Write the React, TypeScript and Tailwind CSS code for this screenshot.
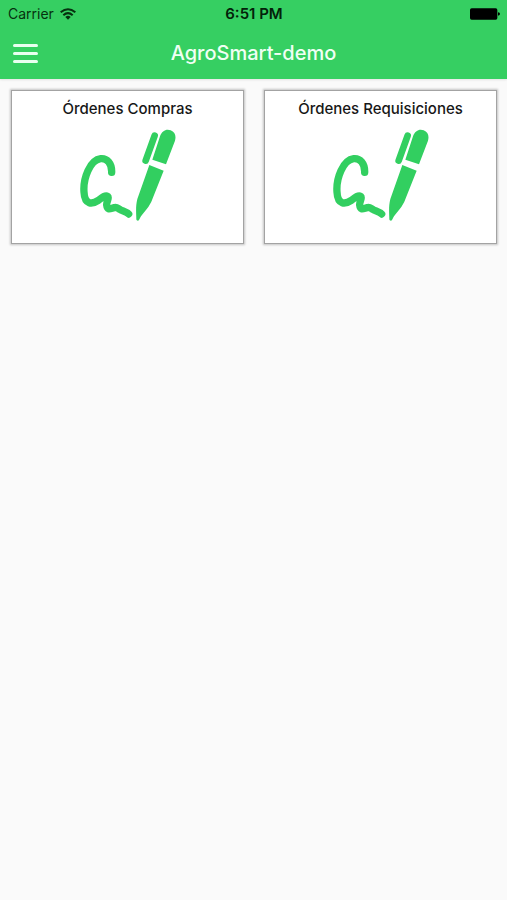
import React from 'react';

function WifiIcon() {
  return (
    <svg viewBox="0 0 48 36" className="h-3 w-4" fill="none" stroke="#06310f" strokeWidth="6" aria-hidden="true">
      <path d="M2 13 Q24 -6 46 13" />
      <path d="M10 22 Q24 9 38 22" />
      <path d="M16 27 Q24 19 32 27 L24 35 Z" fill="#06310f" stroke="none" />
    </svg>
  );
}

function BatteryIcon() {
  return (
    <svg viewBox="0 0 90 36" className="h-3 w-[30px]" fill="#000" aria-hidden="true">
      <rect x="0" y="1" width="82" height="34" rx="5" />
      <path d="M84 13 Q90 14 90 18 Q90 22 84 23 Z" />
    </svg>
  );
}

function SignatureIcon() {
  return (
    <svg viewBox="60 117 288 276" className="h-[92px] w-24" fill="#32cf60" aria-hidden="true">
      <path
        d="M155 247 C156 220 141 204 122 206 C90 210 69 265 72 306 C74 346 97 343 115 331 C127 322 136 315 143 319 C149 324 139 334 140 345 C142 363 152 355 163 353 C169 350 174 355 181 359 C189 363 200 366 206 372"
        fill="none"
        stroke="#32cf60"
        strokeWidth="22"
        strokeLinecap="round"
        strokeLinejoin="round"
      />
      <path d="M284 137 L257 212" fill="none" stroke="#32cf60" strokeWidth="20" strokeLinecap="round" />
      <path d="M277 209 L300 139 C306 122 319 116 332 121 C345 126 349 138 345 152 L318 223 Z" />
      <path d="M268 225 L311 242 L277 328 C269 350 254 365 242 380 L237 390 C235 394 229 392 229 388 C229 374 226 350 232 327 Z" />
    </svg>
  );
}

function OrderCard({ title }: { title: string }) {
  return (
    <button
      type="button"
      className="flex h-[154px] flex-col items-center border border-[#a3a3a3] bg-white pt-2 shadow-[0_0_2px_1px_#c4c4c4]"
    >
      <span className="text-[15px] leading-5 font-medium text-[#171717]">{title}</span>
      <span className="mt-2.5">
        <SignatureIcon />
      </span>
    </button>
  );
}

export default function App() {
  return (
    <div className="min-h-screen bg-[#fafafa] font-['Inter',sans-serif]">
      <header className="bg-[#36cf62] shadow-[0_1px_2px_#e4e4e4]">
        <div className="grid h-[27px] grid-cols-3 items-center pr-[7px] pl-2">
          <div className="flex items-center gap-1.5 text-sm leading-5 text-[#06310f]">
            <span>Carrier</span>
            <WifiIcon />
          </div>
          <time className="text-center text-[15px] leading-5 font-semibold text-[#032109]">6:51 PM</time>
          <div className="flex justify-end">
            <BatteryIcon />
          </div>
        </div>
        <div className="grid h-[52px] grid-cols-[25px_1fr_25px] items-center px-[13px]">
          <button type="button" aria-label="Menu" className="flex flex-col gap-[5px]">
            <span className="h-[3px] w-full rounded-full bg-[#e9fff0]" />
            <span className="h-[3px] w-full rounded-full bg-[#e9fff0]" />
            <span className="h-[3px] w-full rounded-full bg-[#e9fff0]" />
          </button>
          <h1 className="text-center text-xl leading-6 font-medium text-[#f0fff4]">AgroSmart-demo</h1>
        </div>
      </header>
      <main className="grid grid-cols-2 gap-5 pt-[11px] pr-2.5 pl-[11px]">
        <OrderCard title="Órdenes Compras" />
        <OrderCard title="Órdenes Requisiciones" />
      </main>
    </div>
  );
}
